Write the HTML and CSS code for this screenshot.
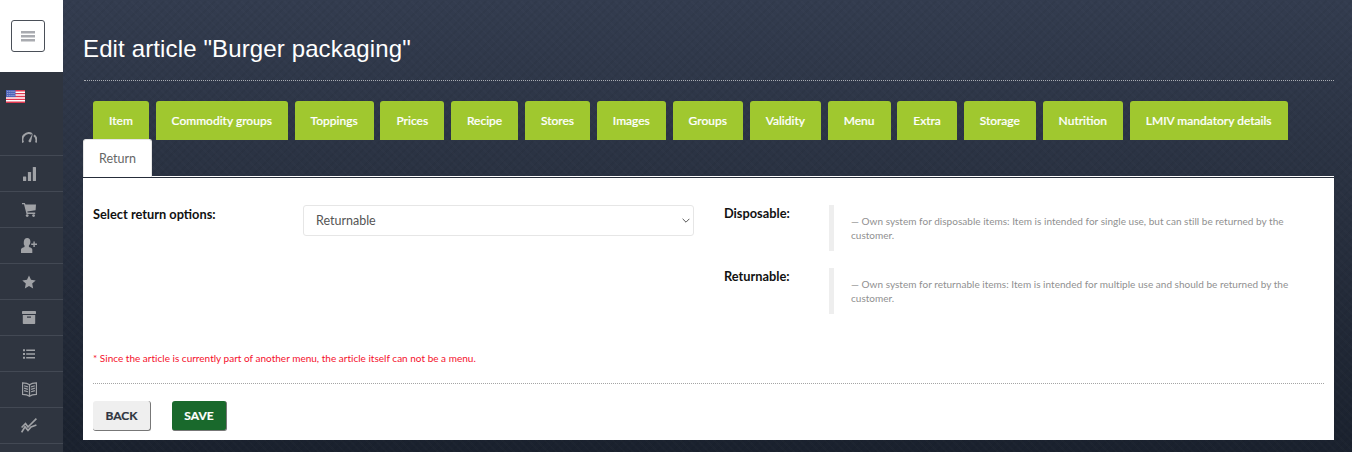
FILE: index.html
```html
<!DOCTYPE html>
<html lang="en">
<head>
<meta charset="utf-8">
<title>Edit article</title>
<link rel="stylesheet" href="styles.css">
</head>
<body>
<div class="app">
  <aside class="sidebar">
    <div class="brand">
      <button class="toggle" type="button" aria-label="Menu">
        <svg width="14" height="12" viewBox="0 0 14 12"><path d="M0 1h14v2.400H0zM0 5h14v2.400H0zM0 9h14v2.400H0z" fill="#a9abb0"/></svg>
      </button>
    </div>
    <div class="flag-row">
      <svg width="19" height="13" viewBox="0 0 20 14" preserveAspectRatio="none">
        <rect width="20" height="14" fill="#fff"/>
        <path d="M0 0h20v1.600H0zM0 3.100h20v1.600H0zM0 6.200h20v1.600H0zM0 9.300h20v1.600H0zM0 12.400h20V14H0z" fill="#e0364f"/>
        <rect width="10" height="7.600" fill="#4f63b8"/>
        <path d="M1.500 1.500h.8M3.700 1.500h.8M5.900 1.500h.8M8 1.500h.8M1.500 3.800h.8M3.700 3.800h.8M5.900 3.800h.8M8 3.800h.8M1.500 6h.8M3.700 6h.8M5.900 6h.8M8 6h.8" stroke="#dfe3f5" stroke-width=".9"/>
      </svg>
    </div>
    <nav class="nav">
      <a class="nav-item"><svg width="15" height="11" viewBox="0 0 15 11"><path d="M1.100 10.500A6.500 6.500 0 0 1 9.800 1.800" fill="none" stroke="#a0a2a6" stroke-width="2"/><path d="M12 3.300a6.500 6.500 0 0 1 2 7.200" fill="none" stroke="#a0a2a6" stroke-width="2"/><path d="M6.500 8.800 11 .8 9 9.800a1.400 1.400 0 0 1-2.500-1z" fill="#a0a2a6"/></svg></a>
      <a class="nav-item"><svg width="13" height="14" viewBox="0 0 13 14"><rect x="0" y="9.500" width="3.200" height="4.500" rx=".5" fill="#a0a2a6"/><rect x="4.900" y="5" width="3.200" height="9" rx=".5" fill="#a0a2a6"/><rect x="9.800" y="0" width="3.200" height="14" rx=".5" fill="#a0a2a6"/></svg></a>
      <a class="nav-item"><svg width="14" height="14" viewBox="0 0 14 14"><path d="M0 0h2.800l.7 1.500H14l-.4 5.800-8.300 1.300.3 1h7.600v1.300H4.500L2 1.300H0z" fill="#a0a2a6"/><circle cx="5.200" cy="12.600" r="1.400" fill="#a0a2a6"/><circle cx="11.600" cy="12.600" r="1.400" fill="#a0a2a6"/></svg></a>
      <a class="nav-item"><svg width="16" height="15" viewBox="0 0 16 15"><path d="M6.200 0c2.100 0 3.200 1.500 3.200 3.800 0 1.500-.6 3-1.500 3.800v1.300c2 .8 3.400 1.200 3.400 2.500V15H0v-3.600c0-1.300 1.500-1.700 3.500-2.500V7.600C2.600 6.800 2.800 5.300 2.800 3.800 3 1.500 4.100 0 6.200 0z" fill="#a0a2a6"/><path d="M12.400 3.500h1.400v2.100H16v1.400h-2.200v2.100h-1.400V7h-2.200V5.600h2.200z" fill="#a0a2a6"/></svg></a>
      <a class="nav-item"><svg width="14" height="14" viewBox="0 0 14 14"><path d="M7 .4l2 4.400 4.700.6-3.500 3.200.95 4.800L7 11l-4.150 2.400.95-4.800L.3 5.400 5 4.800z" fill="#a0a2a6"/></svg></a>
      <a class="nav-item"><svg width="14" height="13" viewBox="0 0 14 13"><rect width="14" height="3" rx=".4" fill="#a0a2a6"/><path d="M.8 4h12.400v8.300a.7.7 0 0 1-.7.7H1.500a.7.7 0 0 1-.7-.7z" fill="#a0a2a6"/><rect x="5" y="5.500" width="4" height="1.200" fill="#2f3540"/></svg></a>
      <a class="nav-item"><svg width="12" height="10" viewBox="0 0 12 10"><path d="M0 .3h2v2H0zM0 4h2v2H0zM0 7.700h2v2H0zM3.200 .6H12v1.500H3.200zM3.200 4.250H12v1.500H3.200zM3.200 7.900H12v1.500H3.200z" fill="#a0a2a6"/></svg></a>
      <a class="nav-item"><svg width="15" height="15" viewBox="0 0 14 14"><path d="M7 2.500C5.500 1.300 3 .8.500.8v10.700c2.500 0 5 .5 6.500 1.700 1.500-1.200 4-1.700 6.500-1.700V.8C11 .8 8.500 1.300 7 2.500z" fill="none" stroke="#a0a2a6" stroke-width="1.200"/><path d="M2 3.500l3.500 1M2 5.800l3.500 1M2 8.100l3.500 1M12 3.500l-3.500 1M12 5.800l-3.500 1M12 8.100l-3.500 1M7 2.500v10.700" stroke="#a0a2a6" stroke-width="1.200" fill="none"/></svg></a>
      <a class="nav-item"><svg width="16" height="15" viewBox="0 0 16 15"><path d="M.6 9.500 4.500 5.500l2.500 3.500 2.500-2.500L15.400.6" fill="none" stroke="#a0a2a6" stroke-width="1.700"/><path d="M.6 14.400 4 8.800l3 3.700 3-3.500 5.400-2" fill="none" stroke="#a0a2a6" stroke-width="1.700"/></svg></a>
    </nav>
  </aside>
  <main class="main">
    <h1 class="title">Edit article "Burger packaging"</h1>
    <div class="tabs">
      <a class="tab">Item</a>
      <a class="tab">Commodity groups</a>
      <a class="tab">Toppings</a>
      <a class="tab">Prices</a>
      <a class="tab">Recipe</a>
      <a class="tab">Stores</a>
      <a class="tab">Images</a>
      <a class="tab">Groups</a>
      <a class="tab">Validity</a>
      <a class="tab">Menu</a>
      <a class="tab">Extra</a>
      <a class="tab">Storage</a>
      <a class="tab">Nutrition</a>
      <a class="tab">LMIV mandatory details</a>
      <a class="tab tab-active">Return</a>
    </div>
    <section class="panel">
      <div class="form-grid">
        <label class="field-label">Select return options:</label>
        <div class="select-wrap">
          <select class="select"><option>Returnable</option><option>Disposable</option></select>
          <svg class="chevron" width="8" height="5" viewBox="0 0 8 5"><path d="M.6.8 4 4.200 7.400.8" fill="none" stroke="#555" stroke-width="1"/></svg>
        </div>
        <div class="info">
          <div class="info-row">
            <strong class="info-label">Disposable:</strong>
            <blockquote class="quote">— Own system for disposable items: Item is intended for single use, but can still be returned by the customer.</blockquote>
          </div>
          <div class="info-row">
            <strong class="info-label">Returnable:</strong>
            <blockquote class="quote">— Own system for returnable items: Item is intended for multiple use and should be returned by the customer.</blockquote>
          </div>
        </div>
      </div>
      <p class="note">* Since the article is currently part of another menu, the article itself can not be a menu.</p>
      <div class="actions">
        <button class="btn btn-back" type="button">BACK</button>
        <button class="btn btn-save" type="button">SAVE</button>
      </div>
    </section>
  </main>
</div>
</body>
</html>
```

FILE: styles.css
```css
* { box-sizing: border-box; }
html, body { margin: 0; height: 452px; overflow: hidden; }
body { font-family: Lato, "Liberation Sans", sans-serif; font-size: 12px; color: #222; }
.app { display: flex; height: 452px; }
.sidebar { width: 63px; flex: none; background: #2f3540; }
.brand { height: 72px; background: #fff; padding: 20px 11px; }
.toggle { display: flex; align-items: center; justify-content: center; width: 34px; height: 32px; padding: 0; background: #fff; border: 1px solid #4a4f58; border-radius: 3px; }
.flag-row { display: flex; padding: 18px 0 0 6px; height: 48px; }
.nav { display: flex; flex-direction: column; }
.nav-item { display: flex; align-items: center; justify-content: center; height: 36px; padding-right: 5px; border-bottom: 1px solid #434954; }
.main {
  flex: 1; padding: 0 18px 0 20px;
  background-color: #262d3a;
  background-image:
    repeating-linear-gradient(45deg, rgba(255,255,255,.012) 0 2px, transparent 2px 6px),
    repeating-linear-gradient(-45deg, rgba(0,0,0,.04) 0 2px, transparent 2px 6px),
    linear-gradient(180deg, #333c4f 0%, #272f3e 50%, #1a212e 100%);
}
.title { margin: 0 0 20px 1px; height: 81px; padding-top: 34px; font: 400 24px/30px "Liberation Sans", Arial, sans-serif; letter-spacing: .13px; text-indent: -1px; color: #fff; border-bottom: 1px dotted #a9acb2; }
.tabs { display: flex; flex-wrap: wrap; padding-left: 10px; column-gap: 6.75px; height: 76px; }
.tab { display: flex; align-items: center; height: 39px; padding: 0 16px; background: #a0c82f; color: #fff; font-weight: 500; font-size: 12px; -webkit-text-stroke: .2px #fff; border-radius: 3px 3px 0 0; }
.tab-active { margin-left: -10px; margin-top: -1px; height: 38px; padding: 0 15px; background: #fff; color: #666; font-weight: 400; font-size: 12.5px; -webkit-text-stroke: 0; border: 1px solid #e6e6e6; border-bottom: 0; }
.panel { height: 263px; background: #fff; border-top: 1px solid #262d3a; padding: 0 10px; box-shadow: 0 -1px 0 #fff; }
.form-grid { display: grid; grid-template-columns: 210px 391px 1fr; padding-top: 27px; height: 170px; }
.field-label { padding-top: 1px; font-weight: 700; font-size: 12.8px; line-height: 16px; color: #111; }
.select-wrap { position: relative; height: 31px; }
.select { display: block; width: 100%; height: 31px; padding: 0 12px; font: 400 12.5px Lato, sans-serif; color: #555; background: #fff; border: 1px solid #e6e6e6; border-radius: 3px; appearance: none; }
.chevron { position: absolute; top: 13px; right: 4px; }
.info { padding-left: 30px; }
.info-row { display: grid; grid-template-columns: 105px 1fr; height: 63px; }
.info-label { font-size: 12.8px; line-height: 16px; color: #111; }
.quote { margin: 0; height: 46px; padding: 9px 30px 0 17px; border-left: 5px solid #eee; font-size: 10px; line-height: 14px; letter-spacing: .025px; color: #909090; }
.note { margin: 0; height: 36px; padding-top: 3px; font-size: 10px; line-height: 14px; letter-spacing: .012px; color: #f5102c; border-bottom: 1px dotted #a5a5a5; }
.actions { display: flex; gap: 21px; padding-top: 17px; }
.btn { height: 30px; padding: 0; font: 700 12px Lato, sans-serif; -webkit-text-stroke: .2px; border: 0; border-radius: 3px; border-right: 1px solid #777; border-bottom: 1px solid #777; }
.btn-back { width: 58px; background: #efefef; color: #2f3540; }
.btn-save { width: 55px; background: #19692c; color: #fff; }
```
